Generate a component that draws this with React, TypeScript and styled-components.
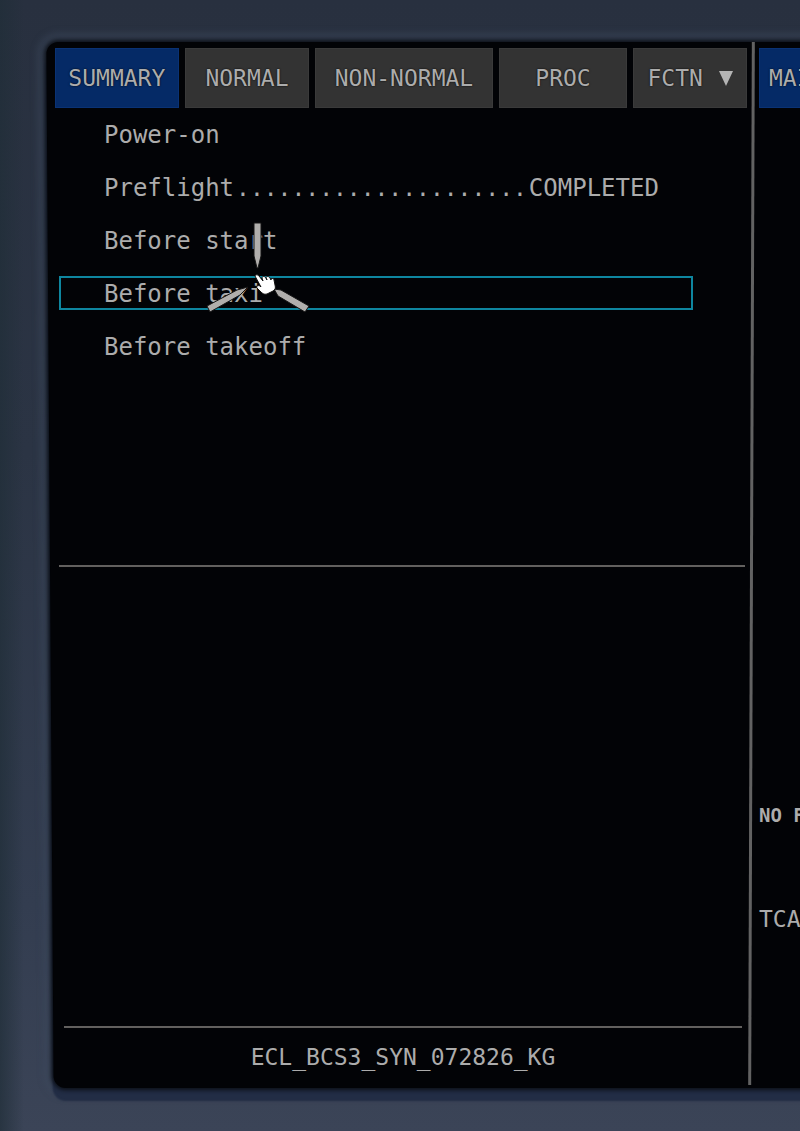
import React from "react";
import styled, { createGlobalStyle } from "styled-components";

const GlobalStyle = createGlobalStyle`
  * { box-sizing: border-box; }
  body { margin: 0; background: #2c3648; }
  button, input { font: inherit; color: inherit; }
`;

const Bezel = styled.main`
  min-height: 100vh;
  display: flex;
  padding: 42px 0 43px 48px;
  overflow: hidden;
  color: #acacac;
  font-family: "DejaVu Sans Mono", "Liberation Mono", monospace;
  font-size: 23px;
  line-height: 32px;
  background:
    linear-gradient(90deg, rgba(32, 46, 56, 0.7), rgba(32, 46, 56, 0) 24px),
    linear-gradient(180deg, #28303f 0, #2b3444 40%, #333d50 80%, #3b4457 100%);
`;

const Screen = styled.div`
  position: relative;
  z-index: 0;
  flex: 1;
  display: flex;
  min-width: 0;

  &::before {
    content: "";
    position: absolute;
    z-index: -1;
    inset: 0 -40px 0 2px;
    border-radius: 12px;
    background: #020306;
    box-shadow:
      0 0 4px 2px #0b0f16,
      0 12px 2px 1px #222d45,
      0 0 6px 10px rgba(62, 74, 94, 0.4);
    transform: skewX(0.4deg);
  }
`;

const Pane = styled.section`
  flex: 1;
  min-width: 0;
  display: flex;
  flex-direction: column;
  padding: 6px 3px 0 7px;
`;

const Divider = styled.div`
  flex: 0 0 3px;
  margin-bottom: 3px;
  background: #626262;
  transform: skewX(-0.2deg);
`;

const SidePane = styled.aside`
  flex: 0 0 47px;
  min-width: 0;
  display: flex;
  flex-direction: column;
  padding: 6px 0 0 6px;
  overflow: hidden;
  white-space: nowrap;
`;

const Tabs = styled.nav`
  display: grid;
  grid-template-columns: 124fr 125fr 178fr 129fr 114fr;
  gap: 6px;
`;

const Tab = styled.button<{ $active?: boolean }>`
  height: 60px;
  display: flex;
  align-items: center;
  justify-content: center;
  gap: 16px;
  padding: 0;
  border: 1px solid ${(p) => (p.$active ? "#0a3274" : "#3a3a3a")};
  background: ${(p) => (p.$active ? "#052a66" : "#333333")};
  white-space: nowrap;
  text-shadow: 0 0 2px #000;
`;

const SideTab = styled(Tab)`
  flex: none;
  width: 124px;
  justify-content: flex-start;
  padding-left: 9px;
`;

const Arrow = styled.svg`
  width: 14px;
  height: 15px;
  fill: #b4b4b4;
`;

const Checklists = styled.ul`
  flex: 448;
  display: flex;
  flex-direction: column;
  gap: 19px;
  margin: 0;
  padding: 9px 54px 0 4px;
  list-style: none;
`;

const Item = styled.button<{ $selected?: boolean }>`
  display: flex;
  width: 100%;
  height: 34px;
  padding: 1px 0 0 43px;
  border: 2px solid ${(p) => (p.$selected ? "#0e869f" : "transparent")};
  background: none;
  font-size: 24px;
  line-height: 30px;
  text-align: left;
  white-space: nowrap;
`;

const Leader = styled.span`
  margin: 0 2px;
  font-size: 23px;
`;

const Rule = styled.hr`
  width: calc(100% - 6px);
  height: 2px;
  margin: 0 2px 0 4px;
  border: 0;
  background: #62605e;
`;

const FooterRule = styled(Rule)`
  width: calc(100% - 14px);
  margin: 0 5px 0 9px;
`;

const Detail = styled.div`
  flex: 459;
`;

const Footer = styled.footer`
  height: 60px;
  padding: 13px 0 0 4px;
  text-align: center;
`;

const Notice = styled.p<{ $small?: boolean }>`
  margin: 0 0 72px;
  font-size: ${(p) => (p.$small ? 19 : 23)}px;
  font-weight: ${(p) => (p.$small ? 700 : 400)};
`;

const Notices = styled.div`
  margin-top: auto;
  padding-bottom: 81px;
`;

const Pointer = styled.svg`
  position: absolute;
  left: 156px;
  top: 178px;
  width: 108px;
  height: 96px;
  pointer-events: none;
`;

const checklists = [
  { name: "Power-on" },
  { name: "Preflight", status: "COMPLETED" },
  { name: "Before start" },
  { name: "Before taxi", selected: true },
  { name: "Before takeoff" },
];

export default function App() {
  return (
    <>
      <GlobalStyle />
      <Bezel>
        <Screen>
          <Pane>
            <Tabs>
              <Tab $active>SUMMARY</Tab>
              <Tab>NORMAL</Tab>
              <Tab>NON-NORMAL</Tab>
              <Tab>PROC</Tab>
              <Tab>
                FCTN
                <Arrow viewBox="0 0 14 15" aria-hidden="true">
                  <path d="M0 0h14L7 15z" />
                </Arrow>
              </Tab>
            </Tabs>
            <Checklists>
              {checklists.map(({ name, status, selected }) => (
                <li key={name}>
                  <Item $selected={selected}>
                    <span>{name}</span>
                    {status && <Leader>{".".repeat(21)}</Leader>}
                    {status && <span>{status}</span>}
                  </Item>
                </li>
              ))}
            </Checklists>
            <Rule />
            <Detail />
            <FooterRule />
            <Footer>ECL_BCS3_SYN_072826_KG</Footer>
          </Pane>
          <Divider />
          <SidePane>
            <SideTab $active>MAIN</SideTab>
            <Notices>
              <Notice $small>NO F</Notice>
              <Notice>TCAS</Notice>
            </Notices>
          </SidePane>
          <Pointer viewBox="204 220 108 96" aria-hidden="true">
            <g fill="#b0aeac" stroke="#151515" strokeWidth="1">
              <path d="M254 223h7v33l-3 12h-1l-3-12z" />
              <path d="M207 306l30-16 11-3-8 8-30 17z" />
              <path d="M274 289l4 7 27 16 4-6-28-16z" />
            </g>
            <path
              d="M255 276c1-2 3-1 4 0l4 5-1-3c0-2 3-2 4 0l1 2-1-2c0-2 3-2 4 0l1 2c0-2 3-2 3 0l1 5c1 3 0 5-2 6l-6 3c-3 1-5-1-6-2l-4-4c-1-2 1-3 3-2l1 1z"
              fill="#fff"
              stroke="#111"
              strokeWidth="1"
            />
          </Pointer>
        </Screen>
      </Bezel>
    </>
  );
}
